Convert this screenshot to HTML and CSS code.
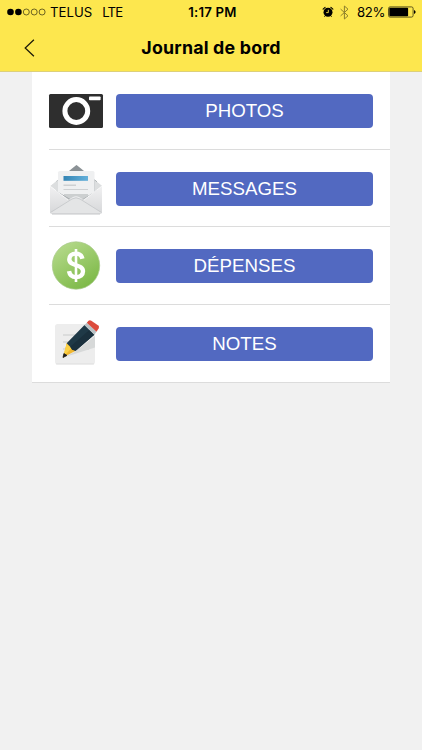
FILE: index.html
```html
<!DOCTYPE html>
<html lang="fr">
<head>
    <meta charset="UTF-8">
    <meta name="viewport" content="width=device-width, initial-scale=1.0">
    <title>Journal de bord</title>
    <link rel="stylesheet" href="styles.css">
</head>
<body>
    <header class="header">
        <div class="status-bar">
            <div class="status-left">
                <svg class="signal" width="39" height="8" viewBox="0 0 39 8">
                    <circle cx="3.5" cy="4" r="3.3"/>
                    <circle cx="11.4" cy="4" r="3.3"/>
                    <g fill="none" stroke="#302c10" stroke-width="0.7">
                        <circle cx="19.3" cy="4" r="3"/>
                        <circle cx="27.2" cy="4" r="3"/>
                        <circle cx="35.1" cy="4" r="3"/>
                    </g>
                </svg>
                <span class="carrier">TELUS</span>
                <span class="network">LTE</span>
            </div>
            <span class="clock">1:17 PM</span>
            <div class="status-right">
                <svg class="alarm" width="12" height="12" viewBox="0 0 12 12">
                    <circle cx="6" cy="6.3" r="4.5"/>
                    <path d="M1.1 3.2 3.1 1.300M8.900 1.300l2 1.900" stroke="#000" stroke-width="1.100" stroke-linecap="round"/>
                    <path d="M3.200 9.800l-.8 1M8.800 9.800l.8 1" stroke="#000" stroke-width=".9"/>
                    <path d="M6.300 3.800v2.800H4.200" fill="none" stroke="#fde74e" stroke-width=".9"/>
                </svg>
                <svg class="bluetooth" width="9" height="15" viewBox="0 0 9 15">
                    <path d="M.6 4.1 8 10.8 4.4 14V1L8 4.2.6 10.9" fill="none" stroke="#8c7f2c" stroke-width="1"/>
                </svg>
                <span class="percent">82%</span>
                <svg class="battery" width="28" height="12" viewBox="0 0 28 12">
                    <rect x=".5" y=".9" width="24.6" height="10.2" rx="1.6" fill="none" stroke="#3a350f" stroke-width=".8"/>
                    <rect x="1.3" y="1.7" width="18.8" height="8.6" rx=".8"/>
                    <path d="M26 4v4c1.2-.5 1.6-1.2 1.6-2S27.2 4.5 26 4z"/>
                </svg>
            </div>
        </div>
        <div class="nav-bar">
            <a href="#" class="back-btn">
                <svg width="11" height="18" viewBox="0 0 11 18">
                    <path d="M9.9.8 1.2 9l8.7 8.2" fill="none" stroke="#1c1a08" stroke-width="1.25"/>
                </svg>
            </a>
            <h1>Journal de bord</h1>
        </div>
    </header>

    <main class="menu">
        <div class="menu-row">
            <svg class="menu-icon" viewBox="0 0 56 56">
                <rect x="1" y="11" width="54" height="34" rx="1.5" fill="#2e2e2e"/>
                <circle cx="28.3" cy="28" r="11.4" fill="none" stroke="#fff" stroke-width="5"/>
                <rect x="41" y="13.5" width="11.6" height="3.7" rx=".8" fill="#fff"/>
            </svg>
            <a href="#" class="menu-btn">PHOTOS</a>
        </div>

        <div class="menu-row">
            <svg class="menu-icon" viewBox="0 0 56 56">
                <defs>
                    <linearGradient id="envelope" x1="0" y1="0" x2="0" y2="1">
                        <stop offset="0" stop-color="#f1f1f2"/>
                        <stop offset="1" stop-color="#d6d7d9"/>
                    </linearGradient>
                    <linearGradient id="banner" x1="0" y1="0" x2="1" y2="0">
                        <stop offset="0" stop-color="#3384b4"/>
                        <stop offset="1" stop-color="#64b0da"/>
                    </linearGradient>
                </defs>
                <path d="M2.5 25 28.5 4 54 25 28 44z" fill="#dfe1e2"/>
                <path d="M8 20.500 28.500 4 49 20.500v10L28 42 8 30.500z" fill="#8b9296"/>
                <path d="M2.5 25 10 19v12zM54 25l-7.500-6v12z" fill="#dcdedf"/>
                <path d="M12 10h33q1.500 0 1.500 1.500V31L35 38H22L10 31V11.500Q10 10 12 10z" fill="#eff0f1"/>
                <path d="M15.500 15H40v4.800H15.500z" fill="url(#banner)"/>
                <path d="M15.500 23.500H28V25H15.500zM15.500 28H40v1H15.500z" fill="#ced0d2"/>
                <path d="M2 25l18 14 5.500-2.500q2.500-1 5 0L36 39l18-14v26q0 2-2 2H4q-2 0-2-2z" fill="url(#envelope)"/>
                <path d="M16 36 20 39l5-3q3-1.400 6 0l5 3 4-3v-3H16z" fill="#a1a6a9" opacity=".45"/>
                <path d="M2.500 51.500 24 38q4-2.400 8 0l21.500 13.500-1.500 1.500H4z" fill="#e4e5e6"/>
                <path d="M2.5 51.500 24 38q4-2.400 8 0l21.500 13.500" fill="none" stroke="#c3c5c8" stroke-width=".8"/>
                <path d="M2 25l18 14M54 25 36 39" stroke="#fafafa" stroke-width=".8"/>
                <path d="M4 53h48" stroke="#b5b7ba" stroke-width=".8"/>
            </svg>
            <a href="#" class="menu-btn">MESSAGES</a>
        </div>

        <div class="menu-row">
            <svg class="menu-icon" viewBox="0 0 56 56">
                <defs>
                    <linearGradient id="coin" x1="0" y1="0" x2=".6" y2="1">
                        <stop offset="0" stop-color="#bbdd92"/>
                        <stop offset="1" stop-color="#7fba4a"/>
                    </linearGradient>
                </defs>
                <circle cx="28" cy="27.500" r="23.700" fill="url(#coin)" stroke="#a8c98a" stroke-width=".7"/>
                <path d="M34.400 20.800C33.600 17 31.500 15.600 27.900 15.600c-4 0-6.600 2.300-6.600 5.600 0 7.900 13.700 4.200 13.700 12.100 0 3.400-2.800 5.800-7 5.800-4 0-6.300-2.100-7-6" fill="none" stroke="#fff" stroke-width="4.400"/>
                <path d="M28 11v33" stroke="#fff" stroke-width="2.600"/>
            </svg>
            <a href="#" class="menu-btn">DÉPENSES</a>
        </div>

        <div class="menu-row">
            <svg class="menu-icon" viewBox="0 0 56 56">
                <rect x="7" y="8" width="40" height="40.300" rx="2.500" fill="#ededed"/>
                <path d="M8 48h38" stroke="#d8d8d8" stroke-width=".8"/>
                <path d="M15 19h17M15 26h10M15 33h26" stroke="#c9cbcb" stroke-width="1.200"/>
                <path d="M17 41 28 35l19-15v11.500z" fill="#d7d9d9"/>
                <path d="M18.700 27.300 15 41.500l12.700-6.800z" fill="#f0b62f"/>
                <path d="m18.700 27.300-3.700 14.200 8.500-9.500z" fill="#fbd146"/>
                <path d="M15.900 37.500 15 41.500l4-2.100z" fill="#1d1d1d" stroke="#1d1d1d" stroke-width=".8"/>
                <path d="M36.500 9 46.300 18.700 27.700 34.700l-3.500-1-2-3-3.500-3.400z" fill="#1f3947"/>
                <path d="m22.200 30.700 19.200-16.800 4.900 4.800-18.600 16-3.500-1z" fill="#1a303d"/>
                <path d="m36.500 9 2.300-2.300 9.700 9-2.200 3z" fill="#b9c2c5"/>
                <path d="m38.800 6.700 1.700-1.900q1.300-1 2.800-.1l7 4.800q1.300 1.200.4 2.800l-2.200 3.400z" fill="#dc4b3c"/>
            </svg>
            <a href="#" class="menu-btn">NOTES</a>
        </div>
    </main>
</body>
</html>
```
FILE: styles.css
```css
* {
    box-sizing: border-box;
}
body {
    margin: 0;
    min-height: 100vh;
    background: #f1f1f1;
    font-family: "Liberation Sans", Arial, sans-serif;
}
.header {
    height: 72px;
    background: #fde74e;
    border-bottom: 1px solid #ddd07a;
    font-family: Inter, "Liberation Sans", sans-serif;
    color: #000;
}
.status-bar {
    display: grid;
    grid-template-columns: 1fr auto 1fr;
    align-items: center;
    height: 24px;
    padding: 0 6px 0 7px;
    font-size: 13.2px;
    line-height: 24px;
}
.status-left,
.status-right {
    display: flex;
    align-items: center;
}
.status-right {
    justify-content: flex-end;
}
.carrier {
    margin-left: 4px;
}
.network {
    margin-left: 10px;
    letter-spacing: -0.8px;
}
.clock {
    padding-left: 2px;
    font-weight: 600;
    letter-spacing: 0.2px;
}
.bluetooth {
    margin-left: 6px;
}
.percent {
    margin: 0 3px 0 8px;
    letter-spacing: -0.4px;
}
.nav-bar {
    display: grid;
    grid-template-columns: 60px 1fr 60px;
    align-items: center;
    height: 47px;
}
.back-btn {
    display: flex;
    padding-left: 24px;
}
.nav-bar h1 {
    margin: 0;
    font-size: 17.8px;
    font-weight: 700;
    letter-spacing: 0.2px;
    text-align: center;
}
.menu {
    margin: 0 32px;
    padding-left: 17px;
    background: #fff;
    border-bottom: 1px solid #dcdcdc;
}
.menu-row {
    display: flex;
    align-items: center;
    height: 77.5px;
    padding: 1.5px 17px 0 0;
    border-bottom: 1px solid #dcdcdc;
}
.menu-row:last-child {
    height: 77px;
    border-bottom: none;
}
.menu-icon {
    width: 56px;
    height: 56px;
    margin: 0 12px 0 -1px;
}
.menu-btn {
    flex: 1;
    height: 34px;
    border-radius: 4px;
    background: #5269c1;
    color: #fff;
    font-size: 18.7px;
    line-height: 33px;
    text-align: center;
    text-decoration: none;
}
```
